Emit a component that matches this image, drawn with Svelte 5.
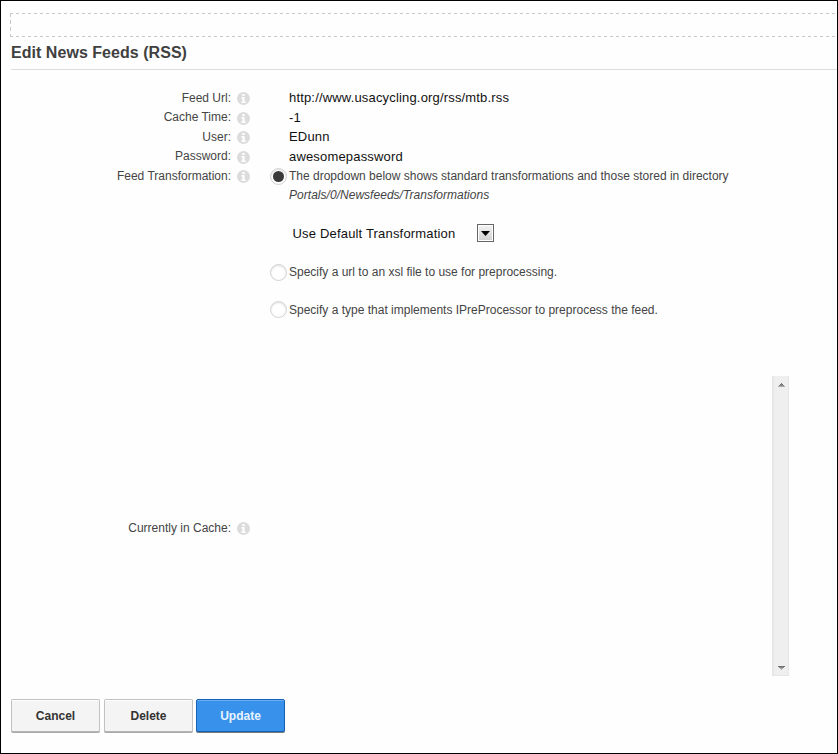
<script>
  const fields = [
    { label: 'Feed Url:', value: 'http://www.usacycling.org/rss/mtb.rss' },
    { label: 'Cache Time:', value: '-1' },
    { label: 'User:', value: 'EDunn' },
    { label: 'Password:', value: 'awesomepassword' }
  ];
  let mode = $state('list');
</script>

{#snippet info()}
  <svg class="info" width="13" height="13" viewBox="0 0 13 13" aria-hidden="true">
    <circle cx="6.5" cy="6.5" r="6.5" fill="#dcdcdc" />
    <path d="M5.3 2h2.3v2H5.3zM4.4 5h3.2v4.4h1.1v1.5H4.3V9.4h1.1V6.5h-1z" fill="#fff" />
  </svg>
{/snippet}

{#snippet label(text)}
  <div class="label"><span>{text}</span>{@render info()}</div>
{/snippet}

{#snippet radio(value)}
  <button class="radio" aria-label={value} onclick={() => (mode = value)}>
    {#if mode === value}<i></i>{/if}
  </button>
{/snippet}

<div class="page">
  <svg class="pane" width="827" height="24" aria-hidden="true">
    <path d="M0 .5H3M6 .5H827M0 23.5H3M6 23.5H827" stroke-dasharray="3 3" />
    <path d="M.5 0V24" stroke-dasharray="4 3" />
  </svg>
  <h1><span>Edit News Feeds (RSS)</span></h1>

  <div class="form">
    {#each fields as f}
      <div class="row">
        {@render label(f.label)}
        <div class="value">{f.value}</div>
      </div>
    {/each}
    <div class="row transform">
      {@render label('Feed Transformation:')}
      <div class="choices">
        <div class="choice">
          {@render radio('list')}
          <div class="text">
            <span>The dropdown below shows standard transformations and those stored in directory</span><br />
            <em>Portals/0/Newsfeeds/Transformations</em>
          </div>
        </div>
        <div class="select">
          <span>Use Default Transformation</span>
          <b class="drop">
            <svg width="9" height="5" viewBox="0 0 9 5"><path d="M0 0h9L4.5 5z" fill="#000" /></svg>
          </b>
        </div>
        <div class="choice">
          {@render radio('url')}
          <div class="text">Specify a url to an xsl file to use for preprocessing.</div>
        </div>
        <div class="choice last">
          {@render radio('type')}
          <div class="text">Specify a type that implements IPreProcessor to preprocess the feed.</div>
        </div>
      </div>
    </div>
    <div class="row cache">
      {@render label('Currently in Cache:')}
      <div class="area">
        <div class="scroll">
          <svg width="7" height="4" viewBox="0 0 7 4" shape-rendering="crispEdges">
            <path d="M3 0h1v1H3zM2 1h3v1H2z" fill="#777" /><path d="M1 2h5v1H1z" fill="#888" /><path d="M0 3h7v1H0z" fill="#aaa" />
          </svg>
          <svg width="7" height="4" viewBox="0 0 7 4" shape-rendering="crispEdges">
            <path d="M0 0h7v1H0z" fill="#707070" /><path d="M1 1h5v1H1z" fill="#888" /><path d="M2 2h3v1H2zM3 3h1v1H3z" fill="#aaa" />
          </svg>
        </div>
      </div>
    </div>
  </div>

  <div class="actions">
    <button>Cancel</button>
    <button>Delete</button>
    <button class="primary">Update</button>
  </div>
</div>

<style>
  :global(body) { margin: 0; background: #fff; }
  .page {
    box-sizing: border-box;
    width: 838px;
    height: 754px;
    border: 1px solid #000;
    padding: 12px 0 0 9px;
    overflow: hidden;
    background: #fefefe;
    color: #444;
    font: 12px/19px "Liberation Sans", Arial, sans-serif;
  }
  .pane { display: block; }
  .pane path { fill: none; stroke: #c8c8c8; }
  h1 {
    margin: 0 0 0 1px;
    height: 32px;
    border-bottom: 1px solid #dcdcdc;
    font-size: 16px;
    line-height: 31px;
    letter-spacing: 0.04px;
    color: #404040;
  }
  .form { padding-top: 18px; }
  .row { display: flex; height: 19.5px; }
  .label {
    display: flex;
    justify-content: flex-end;
    align-items: center;
    gap: 6px;
    width: 240px;
    height: 19.5px;
    flex: none;
    white-space: nowrap;
  }
  .label span { padding-top: 0.6px; }
  .info { position: relative; top: 1px; }
  .value { margin-left: 39px; font-size: 13px; letter-spacing: 0.17px; color: #111; }
  .row.transform { height: 210px; }
  .row.transform .label { padding-top: 0.4px; }
  .row.transform .info { top: 0; }
  .choices { padding: 1px 0 0 20px; }
  .choice { display: flex; align-items: flex-start; gap: 2px; height: 38px; }
  .radio {
    box-sizing: border-box;
    width: 17px;
    height: 17px;
    flex: none;
    margin: 1px 0 0;
    padding: 0;
    display: grid;
    place-items: center;
    border: 1px solid #d2d2d2;
    border-radius: 50%;
    background: #fff;
    box-shadow: inset 0 1px 2px #ddd;
  }
  .last .radio { margin-top: 0; }
  .radio i { width: 11px; height: 11px; border-radius: 50%; background: #3a3a3a; }
  .text { white-space: nowrap; }
  em { letter-spacing: 0.03px; }
  .select {
    display: flex;
    align-items: center;
    height: 56px;
    padding: 0 0 2px 22.5px;
    font-size: 13px;
    letter-spacing: 0.18px;
    color: #111;
  }
  .select span { width: 184.5px; }
  .drop {
    box-sizing: border-box;
    width: 17px;
    height: 18px;
    display: grid;
    place-items: center;
    border: 1px solid #666;
    background: linear-gradient(#f4f4f4, #d0d0d0);
    box-shadow: inset 0 0 0 1px #fff;
  }
  .row.cache { height: 300px; align-items: center; }
  .row.cache .label { padding-top: 2px; }
  .row.cache .label span { padding-top: 2px; }
  .area { width: 539px; height: 300px; display: flex; justify-content: flex-end; }
  .scroll {
    box-sizing: border-box;
    width: 17px;
    height: 300px;
    padding: 7px 0 5px 1px;
    display: flex;
    flex-direction: column;
    justify-content: space-between;
    align-items: center;
    background: #efefef;
    border: 1px solid #e6e6e6;
    border-width: 0 1px 1px 2px;
  }
  .actions { display: flex; gap: 4px; padding: 23px 0 0 1px; }
  .actions button {
    box-sizing: border-box;
    width: 89px;
    height: 33px;
    padding: 2px 0 0;
    border: 1px solid #c2c2c2;
    border-bottom-color: #b4b4b4;
    border-radius: 2px;
    background: #f4f4f4;
    box-shadow: inset 0 1px #fff, 0 1px #aaa;
    color: #333;
    font: bold 12px/29px "Liberation Sans", Arial, sans-serif;
  }
  .actions .primary {
    margin-left: -1px;
    border-color: #1462b4;
    background: #3892ec;
    box-shadow: inset 0 1px #6bb0f5, 0 1px #777;
    color: #e8f2ff;
  }
</style>
